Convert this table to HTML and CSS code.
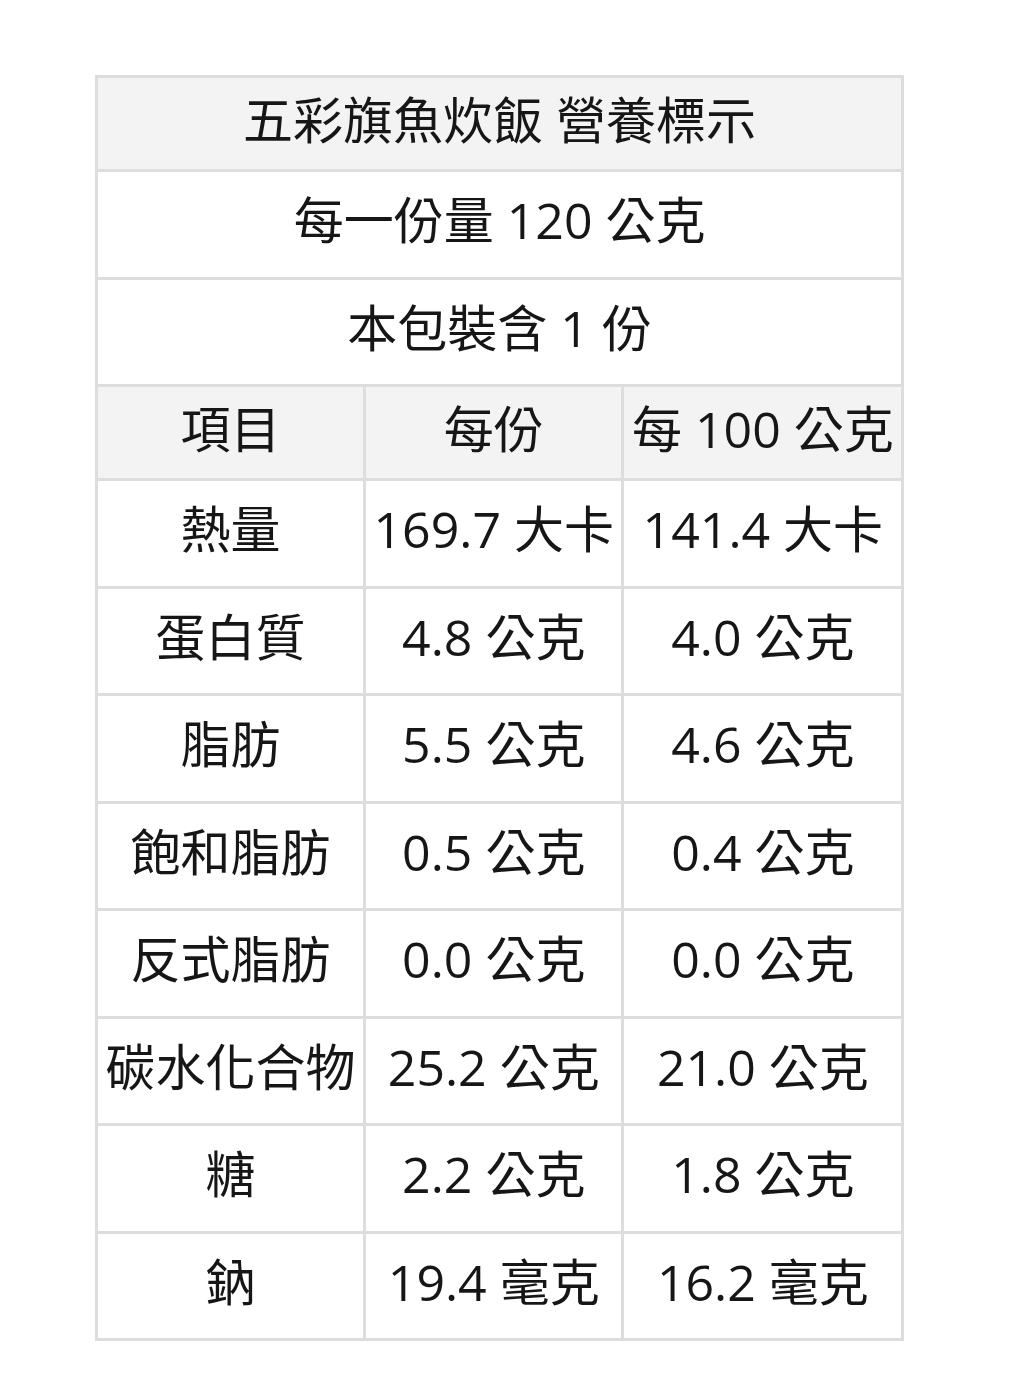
FILE: index.html
```html
<!DOCTYPE html>
<html lang="zh-Hant">
<head>
<meta charset="utf-8">
<title>五彩旗魚炊飯 營養標示</title>
<link rel="stylesheet" href="styles.css">
</head>
<body>
<div class="page">
  <table class="nutrition">
    <tr class="head-row"><th colspan="3">五彩旗魚炊飯 營養標示</th></tr>
    <tr class="body-row"><td colspan="3">每一份量 120 公克</td></tr>
    <tr class="body-row"><td colspan="3">本包裝含 1 份</td></tr>
    <tr class="head-row"><th>項目</th><th>每份</th><th>每 100 公克</th></tr>
    <tr class="body-row"><td>熱量</td><td>169.7 大卡</td><td>141.4 大卡</td></tr>
    <tr class="body-row"><td>蛋白質</td><td>4.8 公克</td><td>4.0 公克</td></tr>
    <tr class="body-row"><td>脂肪</td><td>5.5 公克</td><td>4.6 公克</td></tr>
    <tr class="body-row"><td>飽和脂肪</td><td>0.5 公克</td><td>0.4 公克</td></tr>
    <tr class="body-row"><td>反式脂肪</td><td>0.0 公克</td><td>0.0 公克</td></tr>
    <tr class="body-row"><td>碳水化合物</td><td>25.2 公克</td><td>21.0 公克</td></tr>
    <tr class="body-row"><td>糖</td><td>2.2 公克</td><td>1.8 公克</td></tr>
    <tr class="body-row"><td>鈉</td><td>19.4 毫克</td><td>16.2 毫克</td></tr>
  </table>
</div>
</body>
</html>
```

FILE: styles.css
```css
html, body {
  margin: 0;
  padding: 0;
  background: #ffffff;
}

.page {
  padding: 75px 0 0 95px;
}

.nutrition {
  border-collapse: collapse;
  font-family: "Open Sans", "Noto Sans CJK TC", sans-serif;
  font-size: 50px;
  color: #161616;
}

.nutrition th,
.nutrition td {
  border: 3px solid #dddddd;
  padding: 0 7.5px 8px;
  text-align: center;
  vertical-align: middle;
  white-space: nowrap;
  line-height: 1.2;
}

.nutrition th {
  font-weight: normal;
  background: #f3f3f3;
}

.head-row {
  height: 94px;
}

.body-row {
  height: 107.5px;
}
```
